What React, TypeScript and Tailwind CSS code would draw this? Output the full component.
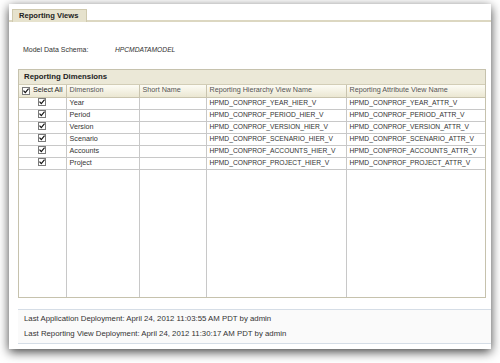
import React from 'react';

const rows = [
  { dim: 'Year', hier: 'HPMD_CONPROF_YEAR_HIER_V', attr: 'HPMD_CONPROF_YEAR_ATTR_V' },
  { dim: 'Period', hier: 'HPMD_CONPROF_PERIOD_HIER_V', attr: 'HPMD_CONPROF_PERIOD_ATTR_V' },
  { dim: 'Version', hier: 'HPMD_CONPROF_VERSION_HIER_V', attr: 'HPMD_CONPROF_VERSION_ATTR_V' },
  { dim: 'Scenario', hier: 'HPMD_CONPROF_SCENARIO_HIER_V', attr: 'HPMD_CONPROF_SCENARIO_ATTR_V' },
  { dim: 'Accounts', hier: 'HPMD_CONPROF_ACCOUNTS_HIER_V', attr: 'HPMD_CONPROF_ACCOUNTS_ATTR_V' },
  { dim: 'Project', hier: 'HPMD_CONPROF_PROJECT_HIER_V', attr: 'HPMD_CONPROF_PROJECT_ATTR_V' },
];

const Check: React.FC = () => (
  <span className="inline-flex w-[8px] h-[8px] border border-[#7a7a7a] bg-white items-center justify-center">
    <svg width="6" height="6" viewBox="0 0 6 6">
      <path d="M0.5 2.6 L2.3 4.6 L5.6 0.6" fill="none" stroke="#111" strokeWidth="1.2" />
    </svg>
  </span>
);

export default function App() {
  return (
    <div className="w-[500px] h-[363px] bg-white pt-[4px] pl-[9px] font-['Liberation_Sans',Arial,sans-serif] text-[7px] text-[#333]">
      <div className="w-[482px] h-[345px] bg-white flex flex-col shadow-[0_3px_10px_rgba(0,0,0,0.75)]">
        {/* Tab strip */}
        <div className="h-[18px] pl-[3px] pt-[5px] border-b-2 border-[#dcd7c1] flex">
          <div className="w-[75px] h-[13px] bg-[#e6e2cd] border border-b-0 border-[#cfc9ae] flex items-center pl-[6px] font-bold text-[7.6px] text-[#222]">
            Reporting Views
          </div>
        </div>

        <div className="pl-[9px] pr-[5px]">
          {/* Schema */}
          <div className="flex items-center h-[10px] mt-[23px] pl-[5px]">
            <span className="w-[92px]">Model Data Schema:</span>
            <span className="italic text-[6.7px]">HPCMDATAMODEL</span>
          </div>

          {/* Reporting Dimensions */}
          <div className="mt-[14px] border border-[#c6c2ad] w-[468px]">
            <div className="h-[15px] bg-[#ebe8d7] flex items-center pl-[5px] font-bold text-[7.8px] text-[#222] border-b border-[#d2cdb6]">
              Reporting Dimensions
            </div>
            <table className="w-full border-collapse table-fixed text-[7.2px]">
              <colgroup>
                <col className="w-[47px]" />
                <col className="w-[73px]" />
                <col className="w-[67px]" />
                <col className="w-[140px]" />
                <col />
              </colgroup>
              <thead>
                <tr className="h-[12px] bg-gradient-to-b from-[#fdfcf5] to-[#ebe7d2]">
                  <th className="border-r border-b border-[#c9c4ae] font-normal text-left pl-[3px] text-[#222]">
                    <span className="flex items-center gap-[3px]"><Check />Select All</span>
                  </th>
                  <th className="border-r border-b border-[#c9c4ae] font-normal text-left pl-[3px] text-[#555]">Dimension</th>
                  <th className="border-r border-b border-[#c9c4ae] font-normal text-left pl-[3px] text-[#555]">Short Name</th>
                  <th className="border-r border-b border-[#c9c4ae] font-normal text-left pl-[3px] text-[#555]">Reporting Hierarchy View Name</th>
                  <th className="border-b border-[#c9c4ae] font-normal text-left pl-[3px] text-[#555]">Reporting Attribute View Name</th>
                </tr>
              </thead>
              <tbody>
                {rows.map((r) => (
                  <tr key={r.dim} className="h-[12px]">
                    <td className="border-r border-b border-[#c8c8c8] text-center align-top leading-[9px]"><Check /></td>
                    <td className="border-r border-b border-[#c8c8c8] pl-[3px]">{r.dim}</td>
                    <td className="border-r border-b border-[#c8c8c8]"></td>
                    <td className="border-r border-b border-[#c8c8c8] pl-[3px] text-[6.7px]">{r.hier}</td>
                    <td className="border-b border-[#c8c8c8] pl-[3px] text-[6.7px]">{r.attr}</td>
                  </tr>
                ))}
                <tr className="h-[128px]">
                  <td className="border-r border-[#c8c8c8]"></td>
                  <td className="border-r border-[#c8c8c8]"></td>
                  <td className="border-r border-[#c8c8c8]"></td>
                  <td className="border-r border-[#c8c8c8]"></td>
                  <td></td>
                </tr>
              </tbody>
            </table>
          </div>
        </div>

        {/* Footer */}
        <div className="ml-[9px] mt-[11px] h-[35px] bg-[#fafafa] border-y border-[#d5dde6] flex flex-col justify-center gap-[5px] pl-[6px] text-[7.8px] leading-[10px] text-[#333]">
          <div>Last Application Deployment: April 24, 2012 11:03:55 AM PDT by admin</div>
          <div>Last Reporting View Deployment: April 24, 2012 11:30:17 AM PDT by admin</div>
        </div>
      </div>
    </div>
  );
}
